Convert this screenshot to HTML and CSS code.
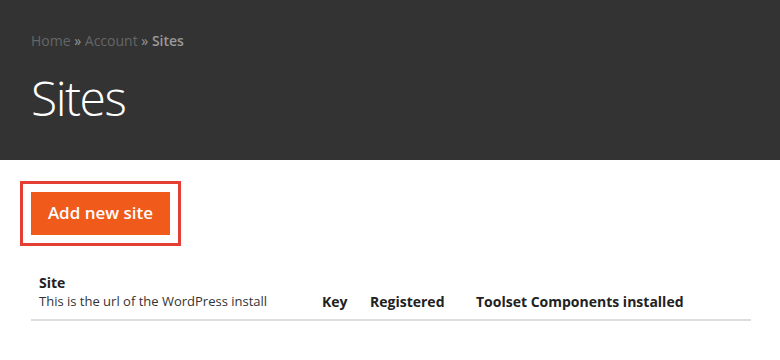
FILE: index.html
```
<!DOCTYPE html>
<html lang="en">
<head>
    <meta charset="UTF-8">
    <title>Sites</title>
    <link rel="stylesheet" href="styles.css">
</head>
<body>
<div id="banner">
    <div class="inner">
        <p class="crumbs"><a href="#">Home</a> &raquo; <a href="#">Account</a> &raquo; <b>Sites</b></p>
        <h1>Sites</h1>
    </div>
</div>
<div id="content">
    <div class="btnFrame">
        <a href="#" class="addBtn">Add new site</a>
    </div>
    <table class="sites">
        <thead>
        <tr>
            <th class="colSite">Site<span>This is the url of the WordPress install</span></th>
            <th class="colKey">Key</th>
            <th class="colReg">Registered</th>
            <th>Toolset Components installed</th>
        </tr>
        </thead>
    </table>
</div>
</body>
</html>
```
FILE: styles.css
```
* {
    padding: 0;
    margin: 0;
}
body {
    font-family: "Open Sans", "Liberation Sans", sans-serif;
    color: #333;
    background: #fff;
}
a {
    text-decoration: none;
}
#banner {
    height: 160px;
    background-color: #333333;
}
#banner .inner {
    padding: 31px 0 0 31px;
}
.crumbs {
    font-size: 14px;
    line-height: 20px;
    color: #999;
}
.crumbs a {
    color: #666;
}
.crumbs b {
    font-weight: 600;
}
#banner h1 {
    margin-top: 17px;
    font-size: 48px;
    line-height: 60px;
    font-weight: 300;
    letter-spacing: -1.5px;
    color: #fff;
}
#content {
    padding: 21px 29px 0 20px;
}
.btnFrame {
    display: inline-block;
    padding: 8px;
    border: 3px solid #e43e35;
}
.addBtn {
    display: block;
    width: 139px;
    height: 43px;
    line-height: 42px;
    text-align: center;
    font-size: 17px;
    font-weight: 600;
    color: #fff;
    background-color: #f05a1a;
}
.sites {
    margin: 27px 0 0 11px;
    width: 720px;
    border-collapse: collapse;
}
.sites th {
    text-align: left;
    vertical-align: bottom;
    font-size: 14px;
    line-height: 19px;
    font-weight: 700;
    color: #222;
    padding: 0 0 8px;
    border-bottom: 2px solid #dddddd;
}
.sites th.colSite {
    padding-left: 8px;
}
.sites th span {
    display: block;
    font-size: 13px;
    font-weight: 400;
    color: #333;
}
.colSite {
    width: 283px;
}
.colKey {
    width: 48px;
}
.colReg {
    width: 106px;
}
```
